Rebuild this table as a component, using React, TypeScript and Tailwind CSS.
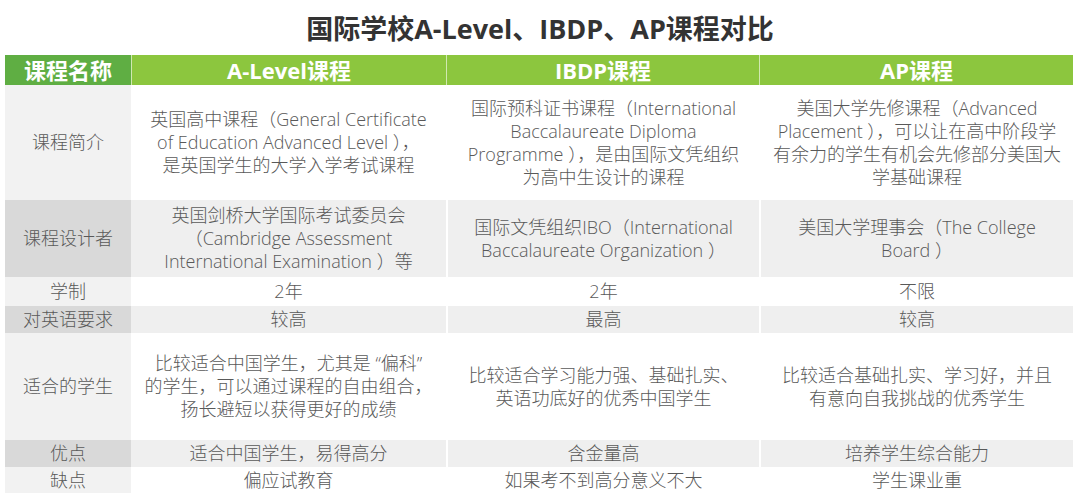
const font = "font-['Open_Sans','Noto_Sans_CJK_SC',sans-serif]";

type Row = {
  label: string;
  cells: string[][];
  h: string;
  shade: boolean;
};

const rows: Row[] = [
  {
    label: '课程简介',
    h: 'h-[115px]',
    shade: false,
    cells: [
      ['英国高中课程（General Certificate', 'of Education Advanced Level ），', '是英国学生的大学入学考试课程'],
      ['国际预科证书课程（International', 'Baccalaureate Diploma', 'Programme ），是由国际文凭组织', '为高中生设计的课程'],
      ['美国大学先修课程（Advanced', 'Placement ），可以让在高中阶段学', '有余力的学生有机会先修部分美国大', '学基础课程'],
    ],
  },
  {
    label: '课程设计者',
    h: 'h-[77px]',
    shade: true,
    cells: [
      ['英国剑桥大学国际考试委员会', '（Cambridge Assessment', 'International Examination ）等'],
      ['国际文凭组织IBO（International', 'Baccalaureate Organization ）'],
      ['美国大学理事会（The College', 'Board ）'],
    ],
  },
  { label: '学制', h: 'h-[29px]', shade: false, cells: [['2年'], ['2年'], ['不限']] },
  { label: '对英语要求', h: 'h-[27px]', shade: true, cells: [['较高'], ['最高'], ['较高']] },
  {
    label: '适合的学生',
    h: 'h-[107px]',
    shade: false,
    cells: [
      ['比较适合中国学生，尤其是 “偏科”', '的学生，可以通过课程的自由组合，', '扬长避短以获得更好的成绩'],
      ['比较适合学习能力强、基础扎实、', '英语功底好的优秀中国学生'],
      ['比较适合基础扎实、学习好，并且', '有意向自我挑战的优秀学生'],
    ],
  },
  { label: '优点', h: 'h-[27px]', shade: true, cells: [['适合中国学生，易得高分'], ['含金量高'], ['培养学生综合能力']] },
  { label: '缺点', h: 'h-[26px]', shade: false, cells: [['偏应试教育'], ['如果考不到高分意义不大'], ['学生课业重']] },
];

const cols = 'grid grid-cols-[126px_315px_313px_314px]';

export default function App() {
  return (
    <div className={`w-[1080px] h-[502px] bg-white ${font}`}>
      <div className="h-[55px] flex items-center justify-center pt-[4px]">
        <h1 className="text-[27px] font-bold text-[#333333]">
          国际学校A-Level、IBDP、AP课程对比
        </h1>
      </div>

      <div className="mx-[5px]">
        {/* header */}
        <div className={`${cols} h-[30px] text-white font-bold text-[22px] leading-[30px] text-center`}>
          <div className="bg-[#5fae43]">课程名称</div>
          <div className="bg-[#8cc63e] border-l border-white/60">A-Level课程</div>
          <div className="bg-[#8cc63e] border-l border-white/60">IBDP课程</div>
          <div className="bg-[#8cc63e] border-l border-white/60">AP课程</div>
        </div>

        {rows.map((row, i) => (
          <div key={i} className={`${cols} ${row.h} text-[#595959] text-[18px] leading-[23px] font-light text-center`}>
            <div className={`flex items-center justify-center ${row.shade ? 'bg-[#d9d9d9]' : 'bg-[#f2f2f2]'}`}>
              {row.label}
            </div>
            {row.cells.map((lines, j) => (
              <div
                key={j}
                className={`flex flex-col items-center justify-center ${j > 0 ? 'border-l-2 border-white' : ''} ${row.shade ? 'bg-[#efefef]' : 'bg-white'}`}
              >
                {lines.map((l, k) => (
                  <div key={k} className="whitespace-nowrap">{l}</div>
                ))}
              </div>
            ))}
          </div>
        ))}
      </div>
    </div>
  );
}
